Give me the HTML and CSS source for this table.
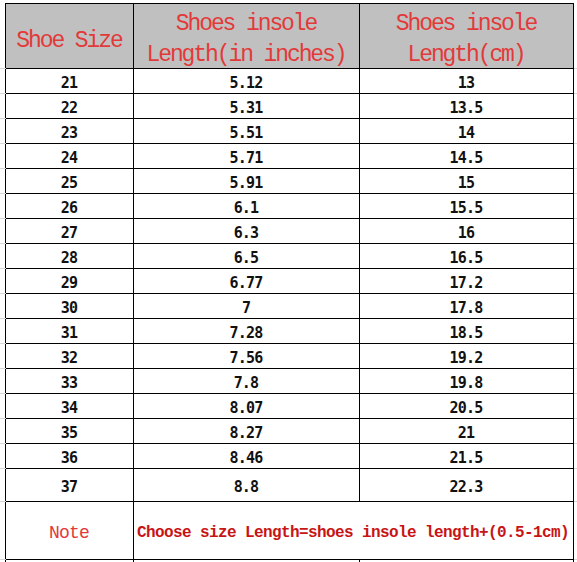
FILE: index.html
```html
<!DOCTYPE html>
<html lang="en">
<head>
<meta charset="utf-8">
<title>Shoe size chart</title>
<link rel="stylesheet" href="styles.css">
</head>
<body>
<table class="chart">
  <colgroup>
    <col class="c-edge-l">
    <col class="c-size">
    <col class="c-inch">
    <col class="c-cm">
    <col class="c-edge-r">
  </colgroup>
  <thead>
    <tr class="head">
      <td class="edge"></td>
      <th class="h-one">Shoe Size</th>
      <th class="h-two"><div class="h-lines">Shoes insole<br>Length(in inches)</div></th>
      <th class="h-two"><div class="h-lines">Shoes insole<br>Length(cm)</div></th>
      <td class="edge"></td>
    </tr>
  </thead>
  <tbody>
    <tr><td class="edge"></td><td>21</td><td>5.12</td><td>13</td><td class="edge"></td></tr>
    <tr><td class="edge"></td><td>22</td><td>5.31</td><td>13.5</td><td class="edge"></td></tr>
    <tr><td class="edge"></td><td>23</td><td>5.51</td><td>14</td><td class="edge"></td></tr>
    <tr><td class="edge"></td><td>24</td><td>5.71</td><td>14.5</td><td class="edge"></td></tr>
    <tr><td class="edge"></td><td>25</td><td>5.91</td><td>15</td><td class="edge"></td></tr>
    <tr><td class="edge"></td><td>26</td><td>6.1</td><td>15.5</td><td class="edge"></td></tr>
    <tr><td class="edge"></td><td>27</td><td>6.3</td><td>16</td><td class="edge"></td></tr>
    <tr><td class="edge"></td><td>28</td><td>6.5</td><td>16.5</td><td class="edge"></td></tr>
    <tr><td class="edge"></td><td>29</td><td>6.77</td><td>17.2</td><td class="edge"></td></tr>
    <tr><td class="edge"></td><td>30</td><td>7</td><td>17.8</td><td class="edge"></td></tr>
    <tr><td class="edge"></td><td>31</td><td>7.28</td><td>18.5</td><td class="edge"></td></tr>
    <tr><td class="edge"></td><td>32</td><td>7.56</td><td>19.2</td><td class="edge"></td></tr>
    <tr><td class="edge"></td><td>33</td><td>7.8</td><td>19.8</td><td class="edge"></td></tr>
    <tr><td class="edge"></td><td>34</td><td>8.07</td><td>20.5</td><td class="edge"></td></tr>
    <tr><td class="edge"></td><td>35</td><td>8.27</td><td>21</td><td class="edge"></td></tr>
    <tr><td class="edge"></td><td>36</td><td>8.46</td><td>21.5</td><td class="edge"></td></tr>
    <tr class="tall"><td class="edge"></td><td>37</td><td>8.8</td><td>22.3</td><td class="edge"></td></tr>
    <tr class="note">
      <td class="edge"></td>
      <td class="note-label">Note</td>
      <td class="note-text" colspan="2">Choose size Length=shoes insole length+(0.5-1cm)</td>
      <td class="edge"></td>
    </tr>
    <tr class="next"><td class="edge"></td><td></td><td></td><td></td><td class="edge"></td></tr>
  </tbody>
</table>
</body>
</html>
```
FILE: styles.css
```css
html, body {
  margin: 0;
  padding: 0;
  background: #ffffff;
  overflow: hidden;
}

.chart {
  border-collapse: collapse;
  table-layout: fixed;
  width: 577px;
  margin-top: 3px;
}

.c-edge-l { width: 5px; }
.c-size { width: 128px; }
.c-inch { width: 226px; }
.c-cm { width: 214px; }
.c-edge-r { width: 4px; }

.chart th,
.chart td {
  border: 1px solid #000;
  padding: 0;
  text-align: center;
  vertical-align: middle;
  white-space: nowrap;
}

.chart td {
  font-family: "DejaVu Sans Mono", "Liberation Mono", monospace;
  font-weight: bold;
  font-size: 15px;
  letter-spacing: -0.8px;
  line-height: 18px;
  color: #111;
  padding-top: 4px;
}

.chart .edge {
  border: none;
  border-bottom: 1px solid #d6d6d6;
  padding: 0;
}

.head th {
  background: #c0c0c0;
  font-family: "Liberation Mono", monospace;
  font-weight: normal;
  font-size: 23px;
  letter-spacing: -2.1px;
  line-height: 30px;
  color: #e23a3a;
}

.head th.h-one {
  padding-top: 9px;
}

.head th.h-two {
  vertical-align: top;
}

.h-lines {
  line-height: 31px;
  margin-top: 5px;
  margin-bottom: -4px;
}

.head { height: 65px; }
.chart tbody tr { height: 25px; }
.chart tbody tr.tall { height: 33px; }
.chart tbody tr.note { height: 58px; }

.note .note-label {
  font-family: "Liberation Mono", monospace;
  font-weight: normal;
  font-size: 18px;
  letter-spacing: -0.8px;
  color: #e23a3a;
}

.note .note-text {
  font-family: "Liberation Mono", monospace;
  font-weight: bold;
  font-size: 16px;
  letter-spacing: -0.6px;
  color: #c81414;
}
```
